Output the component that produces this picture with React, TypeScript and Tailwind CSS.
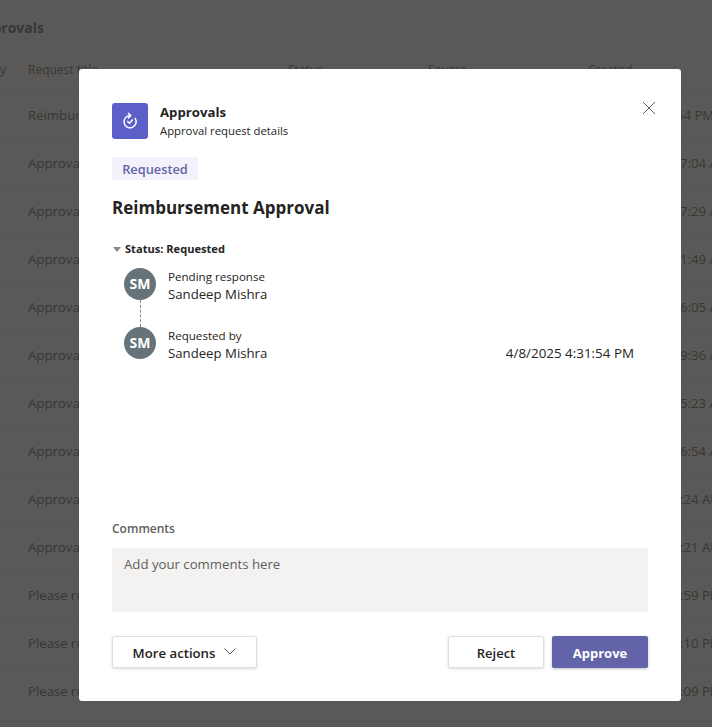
const FONT = "font-['Open_Sans','Noto_Sans',sans-serif]";

const ROWS = [
  { title: "Reimbursement Approval", time: "4/8/2025 4:31:54 PM" },
  { title: "Approval request", time: "3/28/2025 11:37:04 AM" },
  { title: "Approval request", time: "3/28/2025 11:17:29 AM" },
  { title: "Approval request", time: "3/28/2025 11:11:49 AM" },
  { title: "Approval request", time: "3/28/2025 11:06:05 AM" },
  { title: "Approval request", time: "3/28/2025 10:49:36 AM" },
  { title: "Approval request", time: "3/28/2025 10:45:23 AM" },
  { title: "Approval request", time: "3/28/2025 10:36:54 AM" },
  { title: "Approval request", time: "3/28/2025 9:18:24 AM" },
  { title: "Approval request", time: "3/28/2025 9:12:21 AM" },
  { title: "Please review", time: "3/27/2025 4:12:59 PM" },
  { title: "Please review", time: "3/27/2025 4:08:10 PM" },
  { title: "Please review", time: "3/27/2025 4:03:09 PM" },
];

function Background() {
  return (
    <div className="text-[#383736]">
      <div className="flex h-[58px] items-start pt-[19px]">
        <div className="flex w-[44px] justify-end whitespace-nowrap text-[14px] leading-[18px] font-bold">
          Approvals
        </div>
      </div>
      <div className="flex h-[33px] items-start pt-[3px] text-[12px] leading-[18px]">
        <div className="flex w-[6px] shrink-0 justify-end whitespace-nowrap">Created by</div>
        <div className="ml-[22px] w-[260px] shrink-0">Request title</div>
        <div className="w-[140px] shrink-0">Status</div>
        <div className="w-[160px] shrink-0">Source</div>
        <div className="shrink-0">Created</div>
      </div>
      {ROWS.map((row, i) => (
        <div key={i} className="flex h-[48px] items-center whitespace-nowrap border-t border-[#575654] pl-[28px] text-[13.2px]">
          <div className="w-[560px] shrink-0">{row.title}</div>
          <div className="shrink-0">{row.time}</div>
        </div>
      ))}
    </div>
  );
}

function ApprovalIcon() {
  return (
    <svg width="18" height="18" viewBox="0 0 18 18" fill="none" stroke="white" strokeWidth="1.5" strokeLinecap="round" strokeLinejoin="round">
      <path d="M14.2 6.4A6.1 6.1 0 1 1 9 3.6" />
      <path d="M7.4 1.3 9.7 3.6 7.4 5.9" />
      <path d="M6.7 9.6 8.4 11.2 11.4 7.9" />
    </svg>
  );
}

function Avatar() {
  return (
    <div className="flex h-8 w-8 shrink-0 items-center justify-center rounded-full bg-[#667479] pb-[1px] text-[14px] font-bold text-white">
      SM
    </div>
  );
}

function Person({ label, last, date }: { label: string; last?: boolean; date?: string }) {
  return (
    <div className="flex">
      <div className="flex w-8 flex-col items-center">
        <Avatar />
        {!last && <div className="h-[27px] border-l border-dashed border-[#8a8886]" />}
      </div>
      <div className="ml-3 flex-1">
        <div className="text-[11.6px] leading-[17px] text-[#252423]">{label}</div>
        <div className="flex justify-between text-[13.2px] leading-[18px] text-[#252423]">
          <span>Sandeep Mishra</span>
          {date && <span className="mr-[14px] text-[13.4px]">{date}</span>}
        </div>
      </div>
    </div>
  );
}

export default function App() {
  return (
    <div className={`relative h-[727px] w-[712px] overflow-hidden bg-[#5a5957] ${FONT}`}>
      <Background />

      <div className="absolute left-[79px] top-[69px] flex h-[632px] w-[602px] flex-col rounded-[3px] bg-white px-[33px] pb-[33px] pt-[34px]">
        <button className="absolute right-[25px] top-[32px] text-[#605e5c]">
          <svg width="14" height="14" viewBox="0 0 14 14" fill="none" stroke="currentColor" strokeWidth="1">
            <path d="M1 1 13 13M13 1 1 13" />
          </svg>
        </button>

        <div className="flex items-start">
          <div className="flex h-9 w-9 items-center justify-center rounded-[3px] bg-[#5b5fc7]">
            <ApprovalIcon />
          </div>
          <div className="ml-3">
            <div className="text-[13.2px] leading-[18px] font-bold text-[#252423]">Approvals</div>
            <div className="mt-[1px] text-[11.3px] leading-[18px] text-[#252423]">Approval request details</div>
          </div>
        </div>

        <div className="mt-[17px] flex h-[23px] w-[86px] items-center justify-center bg-[#f3f2fb] pt-[2px] text-[12.8px] font-semibold text-[#6264a7]">
          Requested
        </div>

        <h1 className="mt-[16px] text-[17px] leading-[24px] font-bold text-[#252423]">Reimbursement Approval</h1>

        <div className="mt-[21px] flex items-center text-[11.1px] leading-[16px] font-bold text-[#252423]">
          <span className="mr-[4px] ml-[1px] h-0 w-0 border-x-[4px] border-t-[5px] border-x-transparent border-t-[#8a8886]" />
          Status: Requested
        </div>

        <div className="mt-[11px] ml-3 flex flex-col">
          <Person label="Pending response" />
          <Person label="Requested by" last date="4/8/2025 4:31:54 PM" />
        </div>

        <div className="mt-auto text-[12px] leading-[16px] font-semibold text-[#605e5c]">Comments</div>
        <div className="mt-[11px] h-16 bg-[#f3f2f1] px-3 py-[6px] text-[13.2px] leading-[20px] text-[#605e5c]">
          Add your comments here
        </div>

        <div className="mt-6 flex h-8 items-center">
          <button className="flex h-8 w-[145px] items-center justify-center gap-[9px] rounded-[2px] border border-[#e1dfdd] bg-white pt-[3px] text-[13.2px] font-semibold text-[#252423] shadow-[0_1px_3px_rgba(0,0,0,0.15)]">
            More actions
            <svg width="12" height="7" viewBox="0 0 12 7" fill="none" stroke="#605e5c" strokeWidth="1" className="-mt-[4px]">
              <path d="M0.5 0.5 6 6 11.5 0.5" />
            </svg>
          </button>
          <button className="ml-auto h-8 w-24 rounded-[2px] border border-[#e1dfdd] bg-white pt-[3px] text-[13px] font-semibold text-[#252423] shadow-[0_1px_3px_rgba(0,0,0,0.15)]">
            Reject
          </button>
          <button className="ml-2 h-8 w-24 rounded-[2px] bg-[#6264a7] pt-[3px] text-[13px] font-bold text-white shadow-[0_1px_3px_rgba(0,0,0,0.25)]">
            Approve
          </button>
        </div>
      </div>
    </div>
  );
}
